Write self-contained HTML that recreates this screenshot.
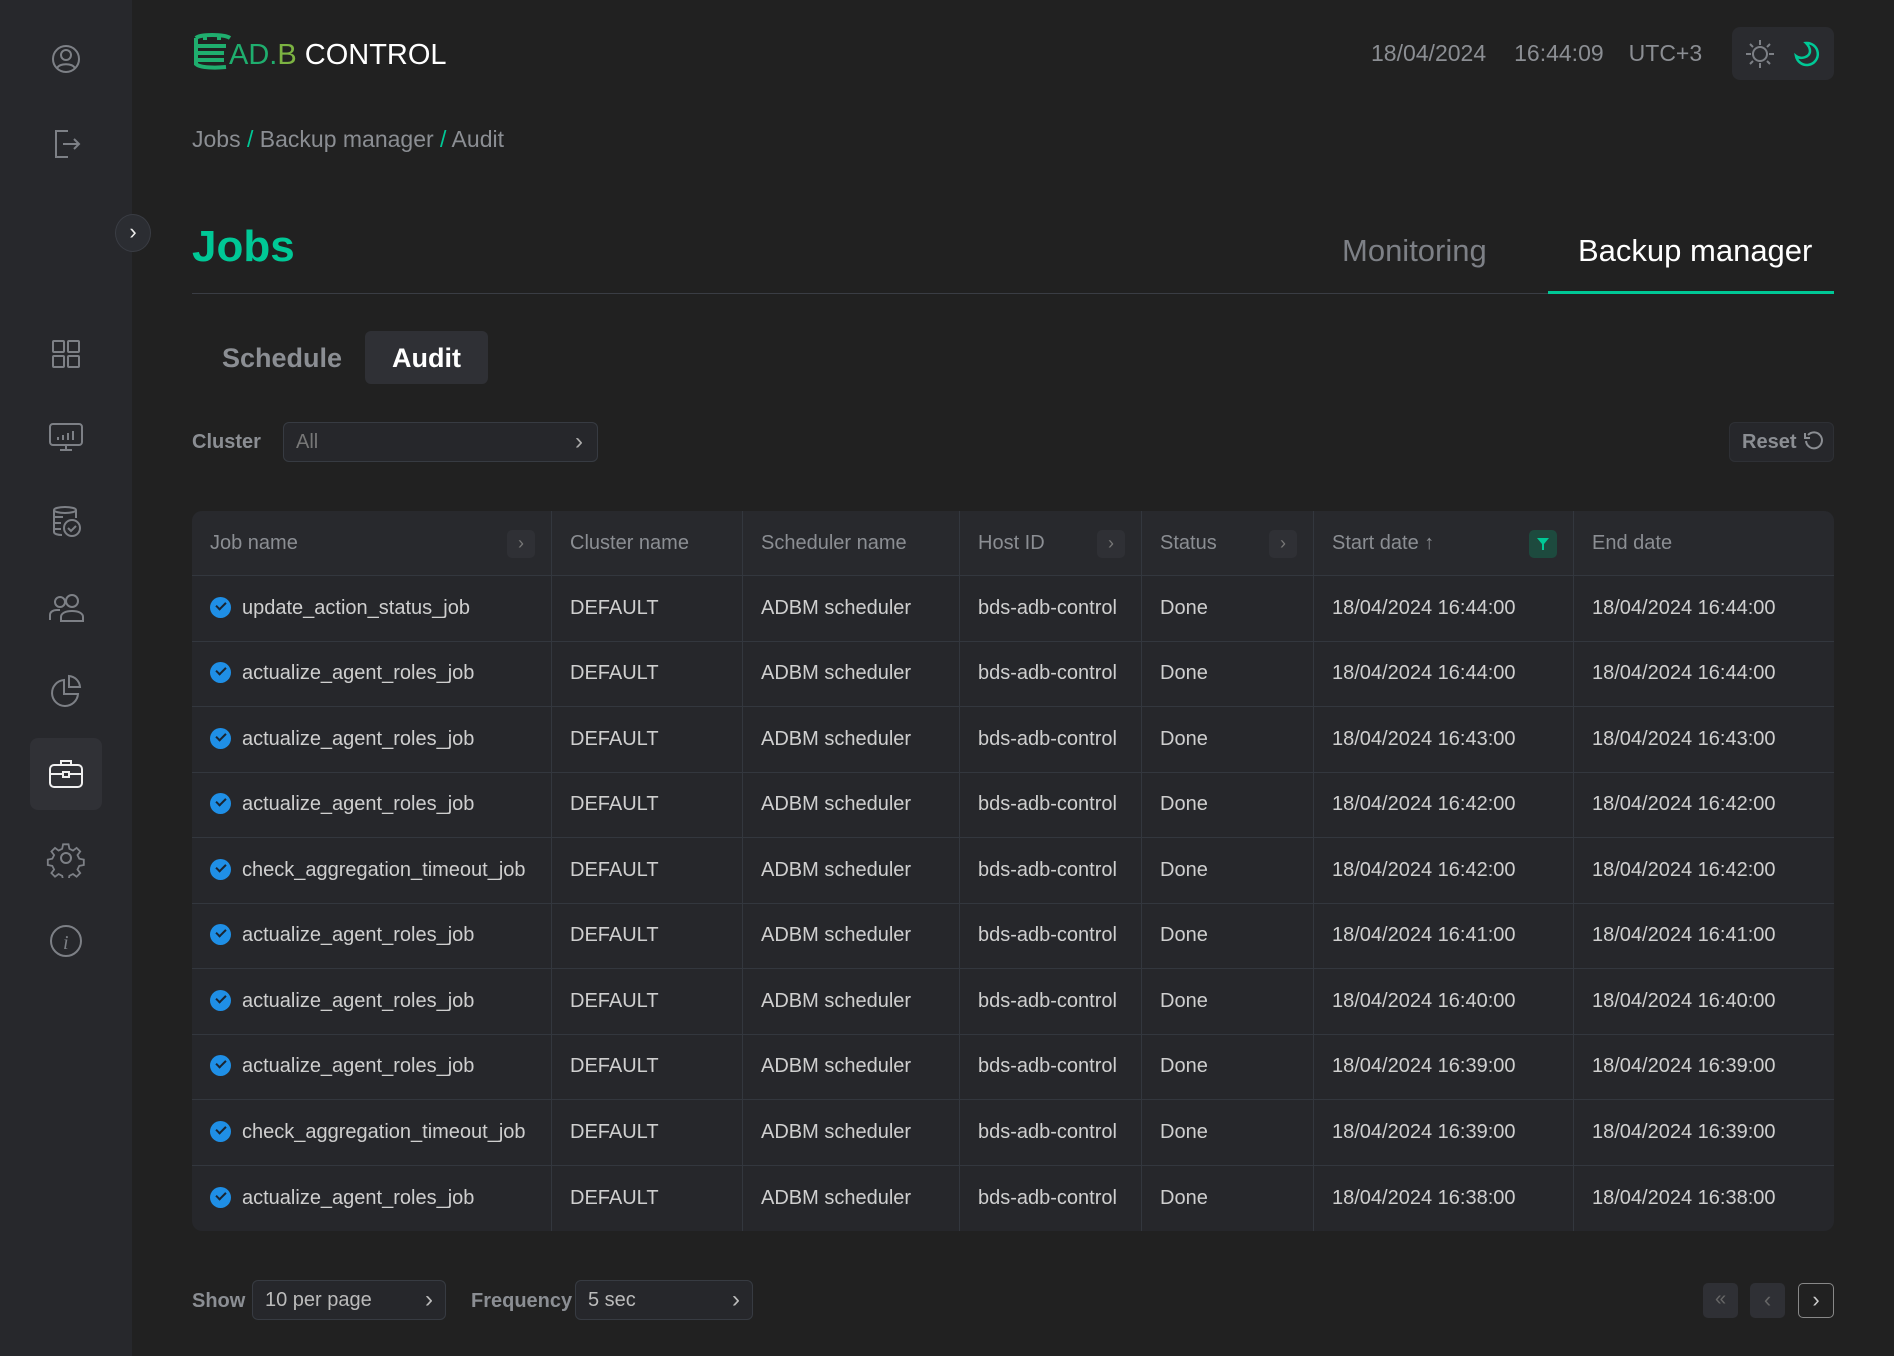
<!DOCTYPE html>
<html><head><meta charset="utf-8"><style>
*{box-sizing:border-box;margin:0;padding:0}
body{width:1894px;height:1356px;background:#212121;font-family:"Liberation Sans",sans-serif;position:relative;overflow:hidden;color:#d4d4d4}
.side{position:absolute;left:0;top:0;width:132px;height:1356px;background:#27282c}
.ic{position:absolute;left:46px;width:40px;height:40px}
.abs{position:absolute}
table{position:absolute;left:192px;top:511px;width:1642px;border-collapse:separate;border-spacing:0;background:#26272b;border-radius:10px;overflow:hidden;table-layout:fixed}
td,th{height:65.5px;font-size:20px;text-align:left;padding-left:18px;border-right:1px solid #33373e;border-bottom:1px solid #33373e;white-space:nowrap;font-weight:normal;color:#cfcfcf}
th{color:#8b8e93;height:65px;position:relative}
tr:last-child td{border-bottom:none}
td:last-child,th:last-child{border-right:none}
.chk{display:inline-block;width:21px;height:21px;border-radius:50%;background:#1f8fe6;vertical-align:-4px;margin-right:11px;position:relative}
.chk:after{content:"";position:absolute;left:6px;top:5px;width:8px;height:4px;border-left:2.5px solid #1a2532;border-bottom:2.5px solid #1a2532;transform:rotate(-45deg)}
.hb{position:absolute;right:16px;top:19px;width:28px;height:28px;border-radius:5px;background:#2f3035;color:#777;text-align:center;line-height:27px;font-size:18px}
.sel{position:absolute;border:1px solid #373b42;border-radius:6px;background:#26272b;color:#bbb;font-size:20px;padding-left:12px}
</style></head><body>
<div class="side">
<svg class="ic" style="top:39px" viewBox="0 0 40 40" fill="none" stroke="#7d8086" stroke-width="2"><circle cx="20" cy="20" r="13"/><circle cx="20" cy="16" r="5"/><path d="M11 29c3-5 15-5 18 0"/></svg>
<svg class="ic" style="top:124px" viewBox="0 0 40 40" fill="none" stroke="#7d8086" stroke-width="2"><path d="M22 7H10v26h12M17 20h16M28 15l5 5-5 5"/></svg>
<svg class="ic" style="top:334px" viewBox="0 0 40 40" fill="none" stroke="#7d8086" stroke-width="2"><rect x="7" y="7" width="11" height="11" rx="1"/><rect x="22" y="7" width="11" height="11" rx="1"/><rect x="7" y="22" width="11" height="11" rx="1"/><rect x="22" y="22" width="11" height="11" rx="1"/></svg>
<svg class="ic" style="top:417px" viewBox="0 0 40 40" fill="none" stroke="#7d8086" stroke-width="2"><rect x="4" y="7" width="32" height="21" rx="3"/><path d="M14 33h12M20 28v5M12 23v-3M17 23v-5M22 23v-7M27 23v-9"/></svg>
<svg class="ic" style="top:502px" viewBox="0 0 40 40" fill="none" stroke="#7d8086" stroke-width="2"><ellipse cx="19" cy="8" rx="11" ry="3"/><path d="M8 8v22c0 2 4 3 8 3M30 8v8M8 15h9M8 21h7M8 27h7"/><circle cx="26" cy="26" r="8"/><path d="M22 26l3 3 5-5"/></svg>
<svg class="ic" style="top:589px" viewBox="0 0 40 40" fill="none" stroke="#7d8086" stroke-width="2"><circle cx="14" cy="13" r="5"/><circle cx="26" cy="12" r="6"/><path d="M4 31v-5c0-3 3-5 7-5h3M15 32v-4c0-4 5-6 11-6s11 2 11 6v4z"/></svg>
<svg class="ic" style="top:671px" viewBox="0 0 40 40" fill="none" stroke="#7d8086" stroke-width="2"><path d="M18 9a13 13 0 1 0 14 14H18z"/><path d="M23 5a12 12 0 0 1 11 11H23z"/></svg>
<div class="abs" style="left:30px;top:738px;width:72px;height:72px;border-radius:8px;background:#303136"></div>
<svg class="ic" style="top:754px" viewBox="0 0 40 40" fill="none" stroke="#f0f0f0" stroke-width="2"><rect x="4" y="11" width="32" height="22" rx="4"/><path d="M15 11V7h10v4M4 20h32"/><rect x="17" y="18" width="6" height="5" fill="#303136"/></svg>
<svg class="ic" style="top:838px" viewBox="0 0 40 40" fill="none" stroke="#7d8086" stroke-width="2"><circle cx="20" cy="20" r="5"/><path d="M17 5h6l1 5 4 2 4-3 4 4-3 4 2 4 5 1v6l-5 1-2 4 3 4-4 4-4-3-4 2-1 5h-6l-1-5-4-2-4 3-4-4 3-4-2-4-5-1v-6l5-1 2-4-3-4 4-4 4 3 4-2z" transform="scale(.9) translate(2 2)"/></svg>
<svg class="ic" style="top:921px" viewBox="0 0 40 40" fill="none" stroke="#7d8086" stroke-width="2"><circle cx="20" cy="20" r="15"/><text x="17" y="28" font-family="Liberation Serif" font-style="italic" font-size="20" fill="#7d8086" stroke="none">i</text></svg>
</div>
<div class="abs" style="left:115px;top:214px;width:36px;height:38px;border-radius:50%;background:#2b2d32;border:1px solid #3a3d44;color:#eee;text-align:center;line-height:34px;font-size:22px">›</div>

<svg class="abs" style="left:192px;top:32px" width="40" height="38" viewBox="0 0 40 38" fill="none" stroke="#1fae6e" stroke-width="4"><path d="M4 6c4-4 28-4 34 0M4 6v26c4 4 20 4 30 3M4 14h30M4 21h28M4 28h28M13 3v5M27 3v5"/></svg>
<div class="abs" style="left:229px;top:38px;font-size:29px;letter-spacing:0px;line-height:34px"><span style="color:#1fae6e">AD.</span><span style="color:#7cb342">B</span> <span style="color:#fff">CONTROL</span></div>

<div class="abs" style="left:1371px;top:40px;font-size:23px;color:#8b8e93"><span>18/04/2024</span><span style="margin-left:28px">16:44:09</span><span style="margin-left:25px">UTC+3</span></div>
<div class="abs" style="left:1732px;top:27px;width:102px;height:53px;border-radius:8px;background:#2a2b2f"></div>
<svg class="abs" style="left:1744px;top:38px" width="32" height="32" viewBox="0 0 32 32" fill="none" stroke="#7d8086" stroke-width="2"><circle cx="16" cy="16" r="7"/><path d="M16 2v5M16 25v5M2 16h5M25 16h5M6 6l3 3M23 23l3 3M6 26l3-3M23 9l3-3"/></svg>
<svg class="abs" style="left:1792px;top:38px" width="32" height="32" viewBox="0 0 32 32" fill="none" stroke="#00c896" stroke-width="2.5"><path d="M14 5a11 11 0 1 1-10 13c5 4 14 1 14-5 0-3-2-6-4-8z"/></svg>

<div class="abs" style="left:192px;top:126px;font-size:23px;color:#8b8e93">Jobs <span style="color:#00c896">/</span> Backup manager <span style="color:#00c896">/</span> Audit</div>
<div class="abs" style="left:192px;top:222px;font-size:44px;font-weight:bold;color:#00c896">Jobs</div>
<div class="abs" style="left:1342px;top:233px;font-size:31px;color:#7d8086">Monitoring</div>
<div class="abs" style="left:1578px;top:233px;font-size:31px;color:#fff">Backup manager</div>
<div class="abs" style="left:192px;top:293px;width:1642px;height:1px;background:#3a3d44"></div>
<div class="abs" style="left:1548px;top:291px;width:286px;height:3px;background:#00c896"></div>

<div class="abs" style="left:222px;top:343px;font-size:27px;font-weight:bold;color:#8b8e93">Schedule</div>
<div class="abs" style="left:365px;top:331px;width:123px;height:53px;border-radius:6px;background:#2f3035;color:#fff;font-size:27px;font-weight:bold;text-align:center;line-height:55px">Audit</div>

<div class="abs" style="left:192px;top:431px;font-size:20px;font-weight:bold;color:#8b8e93">Cluster</div>
<div class="sel" style="left:283px;top:422px;width:315px;height:40px;line-height:38px;color:#777">All<span style="position:absolute;right:14px;color:#aaa;font-size:24px">›</span></div>
<div class="abs" style="left:1729px;top:422px;width:105px;height:40px;border-radius:6px;background:#26272b;border:1px solid #2e3035;color:#8b8e93;font-size:20px;font-weight:bold;line-height:38px;padding-left:12px">Reset <svg style="vertical-align:-4px" width="22" height="22" viewBox="0 0 22 22" fill="none" stroke="#8b8e93" stroke-width="2"><path d="M6 5a8 8 0 1 1-2 6M3 3v5h5"/></svg></div>

<table>
<colgroup><col style="width:360px"><col style="width:191px"><col style="width:217px"><col style="width:182px"><col style="width:172px"><col style="width:260px"><col style="width:260px"></colgroup>
<tr style="background:#28292d"><th>Job name<span class="hb">›</span></th><th>Cluster name</th><th>Scheduler name</th><th>Host ID<span class="hb">›</span></th><th>Status<span class="hb">›</span></th><th>Start date ↑<span class="hb" style="background:#1d4a3e"><svg width="14" height="14" viewBox="0 0 14 14" style="margin-top:7px"><path d="M1 1h12L8 7v6H6V7z" fill="#00c896"/></svg></span></th><th>End date</th></tr>
<tr><td><span class="chk"></span>update_action_status_job</td><td>DEFAULT</td><td>ADBM scheduler</td><td>bds-adb-control</td><td>Done</td><td>18/04/2024 16:44:00</td><td>18/04/2024 16:44:00</td></tr>
<tr><td><span class="chk"></span>actualize_agent_roles_job</td><td>DEFAULT</td><td>ADBM scheduler</td><td>bds-adb-control</td><td>Done</td><td>18/04/2024 16:44:00</td><td>18/04/2024 16:44:00</td></tr>
<tr><td><span class="chk"></span>actualize_agent_roles_job</td><td>DEFAULT</td><td>ADBM scheduler</td><td>bds-adb-control</td><td>Done</td><td>18/04/2024 16:43:00</td><td>18/04/2024 16:43:00</td></tr>
<tr><td><span class="chk"></span>actualize_agent_roles_job</td><td>DEFAULT</td><td>ADBM scheduler</td><td>bds-adb-control</td><td>Done</td><td>18/04/2024 16:42:00</td><td>18/04/2024 16:42:00</td></tr>
<tr><td><span class="chk"></span>check_aggregation_timeout_job</td><td>DEFAULT</td><td>ADBM scheduler</td><td>bds-adb-control</td><td>Done</td><td>18/04/2024 16:42:00</td><td>18/04/2024 16:42:00</td></tr>
<tr><td><span class="chk"></span>actualize_agent_roles_job</td><td>DEFAULT</td><td>ADBM scheduler</td><td>bds-adb-control</td><td>Done</td><td>18/04/2024 16:41:00</td><td>18/04/2024 16:41:00</td></tr>
<tr><td><span class="chk"></span>actualize_agent_roles_job</td><td>DEFAULT</td><td>ADBM scheduler</td><td>bds-adb-control</td><td>Done</td><td>18/04/2024 16:40:00</td><td>18/04/2024 16:40:00</td></tr>
<tr><td><span class="chk"></span>actualize_agent_roles_job</td><td>DEFAULT</td><td>ADBM scheduler</td><td>bds-adb-control</td><td>Done</td><td>18/04/2024 16:39:00</td><td>18/04/2024 16:39:00</td></tr>
<tr><td><span class="chk"></span>check_aggregation_timeout_job</td><td>DEFAULT</td><td>ADBM scheduler</td><td>bds-adb-control</td><td>Done</td><td>18/04/2024 16:39:00</td><td>18/04/2024 16:39:00</td></tr>
<tr><td><span class="chk"></span>actualize_agent_roles_job</td><td>DEFAULT</td><td>ADBM scheduler</td><td>bds-adb-control</td><td>Done</td><td>18/04/2024 16:38:00</td><td>18/04/2024 16:38:00</td></tr>
</table>

<div class="abs" style="left:192px;top:1290px;font-size:20px;font-weight:bold;color:#8b8e93">Show</div>
<div class="sel" style="left:252px;top:1280px;width:194px;height:40px;line-height:38px">10 per page<span style="position:absolute;right:12px;font-size:24px">›</span></div>
<div class="abs" style="left:471px;top:1290px;font-size:20px;font-weight:bold;color:#8b8e93">Frequency</div>
<div class="sel" style="left:575px;top:1280px;width:178px;height:40px;line-height:38px">5 sec<span style="position:absolute;right:12px;font-size:24px">›</span></div>
<div class="abs" style="left:1703px;top:1283px;width:35px;height:35px;border-radius:5px;background:#2f3035;color:#666;text-align:center;line-height:33px;font-size:20px">«</div>
<div class="abs" style="left:1750px;top:1283px;width:35px;height:35px;border-radius:5px;background:#2f3035;color:#666;text-align:center;line-height:33px;font-size:22px">‹</div>
<div class="abs" style="left:1798px;top:1283px;width:36px;height:35px;border-radius:5px;border:1px solid #888;color:#ccc;text-align:center;line-height:31px;font-size:22px">›</div>
</body></html>
